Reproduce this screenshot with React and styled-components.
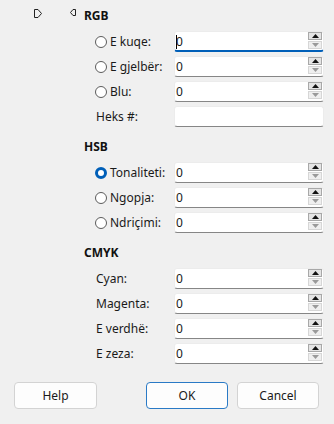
import React from "react";
import styled, { createGlobalStyle } from "styled-components";

const Global = createGlobalStyle`
  html, body { margin: 0; padding: 0; background: #f0f0f0; }
  body { font-family: "Noto Sans", "Open Sans", sans-serif; font-size: 12px; color: #1a1a1a; }
`;

const Page = styled.div`
  width: 334px;
  height: 424px;
  display: flex;
  flex-direction: column;
  background: #f0f0f0;
  overflow: hidden;
`;

const Main = styled.div`
  display: flex;
  padding-top: 8px;
`;

const IconCol = styled.div`
  width: 84px;
  box-sizing: border-box;
  padding: 1px 0 0 34px;
  display: flex;
  align-items: flex-start;
  gap: 28px;
`;

const Form = styled.div`
  width: 240px;
  display: flex;
  flex-direction: column;
  gap: 12px;
`;

const Section = styled.div`
  display: flex;
  flex-direction: column;
`;

const Heading = styled.div`
  height: 16px;
  line-height: 16px;
  font-weight: 700;
  font-size: 12px;
  margin-bottom: 7px;
  color: #111;
`;

const Rows = styled.div`
  display: flex;
  flex-direction: column;
  gap: 4px;
  padding-left: 12px;
`;

const Row = styled.div`
  display: flex;
  align-items: center;
  height: 21px;
`;

const LabelCell = styled.label`
  width: 78px;
  display: flex;
  align-items: center;
  gap: 3px;
  white-space: nowrap;
  font-size: 12px;
  color: #1a1a1a;
`;

const Radio = styled.span`
  width: 12px;
  height: 12px;
  box-sizing: border-box;
  border-radius: 50%;
  margin-left: -1px;
  flex: none;
  border: ${p => (p.$checked ? "3.5px solid #005fb8" : "1px solid #5c5c5c")};
  background: #fff;
`;

const Field = styled.div`
  width: 150px;
  height: 21px;
  box-sizing: border-box;
  background: #fff;
  border: 1px solid #ececec;
  border-bottom: ${p => (p.$focused ? "2px solid #005fb8" : "1px solid #868686")};
  border-radius: 3px;
  display: flex;
  align-items: flex-start;
  position: relative;
`;

const Value = styled.div`
  flex: 1;
  display: flex;
  align-items: center;
  height: 19px;
  padding-left: 1px;
  font-size: 12px;
  color: #1a1a1a;
`;

const Caret = styled.span`
  width: 1px;
  height: 14px;
  background: #000;
  margin-right: -1px;
`;

const Spin = styled.div`
  width: 14px;
  margin: 0 1px 0 0;
  display: flex;
  flex-direction: column;
  gap: 1px;
`;

const SpinBtn = styled.div`
  height: 8px;
  box-sizing: border-box;
  border: 1px solid ${p => (p.$disabled ? "#d6d6d6" : "#a8a8a8")};
  background: ${p => (p.$disabled ? "#efefef" : "#e4e4e4")};
  display: flex;
  align-items: center;
  justify-content: center;
`;

const Footer = styled.div`
  margin-top: 18px;
  padding: 0 15px 0 14px;
  display: flex;
  justify-content: space-between;
`;

const BtnGroup = styled.div`
  display: flex;
  gap: 9px;
`;

const Button = styled.button`
  width: ${p => p.$w || 82}px;
  height: 27px;
  box-sizing: border-box;
  background: #fdfdfd;
  border: 1px solid ${p => (p.$primary ? "#2a7ac6" : "#d3d3d3")};
  border-radius: 4px;
  font-family: "Noto Sans", "Open Sans", sans-serif;
  font-size: 12px;
  color: #1a1a1a;
  padding: 0;
`;

const Tri = ({ up, disabled }) => (
  <svg width="7" height="4" viewBox="0 0 7 4">
    <path d={up ? "M0 4 L3.5 0 L7 4 Z" : "M0 0 L7 0 L3.5 4 Z"} fill={disabled ? "#9a9a9a" : "#111"} />
  </svg>
);

const SpinField = ({ value = "0", focused, spin = true }) => (
  <Field $focused={focused}>
    <Value>
      {focused && <Caret />}
      {value}
    </Value>
    {spin && (
      <Spin>
        <SpinBtn><Tri up /></SpinBtn>
        <SpinBtn $disabled><Tri disabled /></SpinBtn>
      </Spin>
    )}
  </Field>
);

const FieldRow = ({ label, radio, checked, focused, spin = true, value }) => (
  <Row>
    <LabelCell>
      {radio && <Radio $checked={checked} />}
      {label}
    </LabelCell>
    <SpinField focused={focused} spin={spin} value={value} />
  </Row>
);

export default function App() {
  return (
    <Page>
      <Global />
      <Main>
        <IconCol>
          <svg width="8" height="9" viewBox="0 0 8 9">
            <path d="M0.5 0.5 H4 L7.5 4.5 L4 8.5 H0.5 Z" fill="none" stroke="#222" strokeWidth="1" />
          </svg>
          <svg width="6" height="8" viewBox="0 0 6 8">
            <path d="M5.5 0.5 H3 L0.5 3.5 L3 6.5 H5.5 Z" fill="none" stroke="#222" strokeWidth="1" />
          </svg>
        </IconCol>
        <Form>
          <Section>
            <Heading>RGB</Heading>
            <Rows>
              <FieldRow label="E kuqe:" radio focused />
              <FieldRow label="E gjelbër:" radio />
              <FieldRow label="Blu:" radio />
              <FieldRow label="Heks #:" spin={false} value="" />
            </Rows>
          </Section>
          <Section>
            <Heading>HSB</Heading>
            <Rows>
              <FieldRow label="Tonaliteti:" radio checked />
              <FieldRow label="Ngopja:" radio />
              <FieldRow label="Ndriçimi:" radio />
            </Rows>
          </Section>
          <Section>
            <Heading>CMYK</Heading>
            <Rows>
              <FieldRow label="Cyan:" />
              <FieldRow label="Magenta:" />
              <FieldRow label="E verdhë:" />
              <FieldRow label="E zeza:" />
            </Rows>
          </Section>
        </Form>
      </Main>
      <Footer>
        <Button $w={83}>Help</Button>
        <BtnGroup>
          <Button $primary>OK</Button>
          <Button>Cancel</Button>
        </BtnGroup>
      </Footer>
    </Page>
  );
}
